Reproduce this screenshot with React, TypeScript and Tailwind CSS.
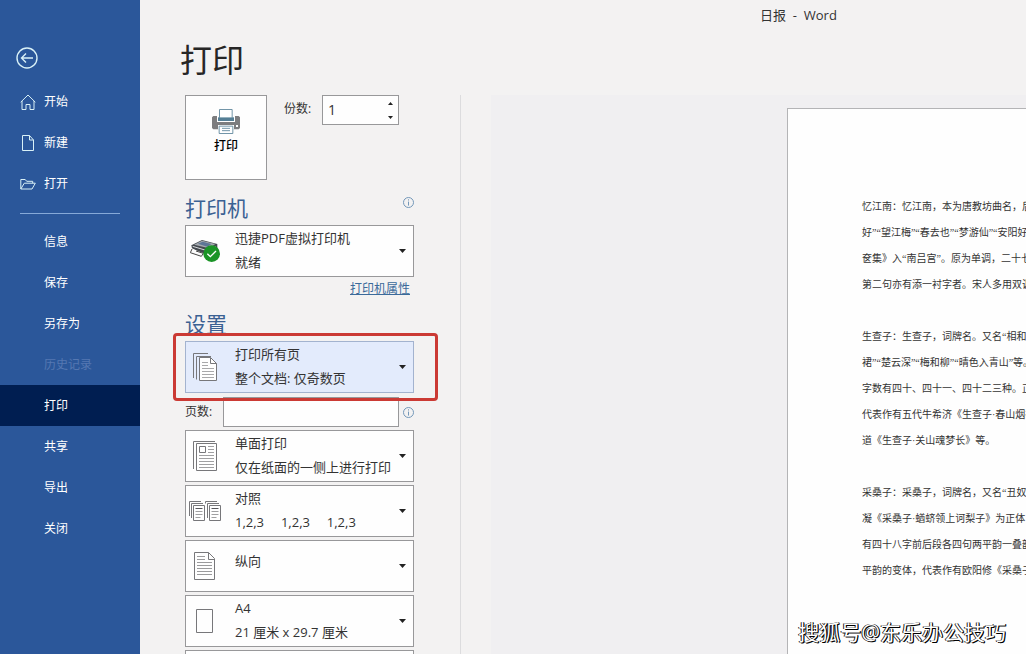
import { useState, type ReactNode } from "react";
import clsx from "clsx";

const paragraphs = [
  [
    "忆江南：忆江南，本为唐教坊曲名，后用为词牌名",
    "好”“望江梅”“春去也”“梦游仙”“安阳好”“步虚声",
    "奁集》入“南吕宫”。原为单调，二十七字",
    "第二句亦有添一衬字者。宋人多用双调",
  ],
  [
    "生查子：生查子，词牌名。又名“相和柳”",
    "裙”“楚云深”“梅和柳”“晴色入青山”等。",
    "字数有四十、四十一、四十二三种。正体",
    "代表作有五代牛希济《生查子·春山烟欲收》",
    "道《生查子·关山魂梦长》等。",
  ],
  [
    "采桑子：采桑子，词牌名，又名“丑奴儿”",
    "凝《采桑子·蝤蛴领上诃梨子》为正体，",
    "有四十八字前后段各四句两平韵一叠韵",
    "平韵的变体，代表作有欧阳修《采桑子》",
  ],
];

const navItems = ["信息", "保存", "另存为", "历史记录", "打印", "共享", "导出", "关闭"];

function BackIcon() {
  return (
    <svg width="22" height="22" viewBox="0 0 22 22" fill="none" stroke="currentColor" strokeWidth="1.4">
      <circle cx="11" cy="11" r="10" />
      <path d="M17 11H5.5M10 6.5 5.5 11l4.5 4.5" />
    </svg>
  );
}

function HomeIcon() {
  return (
    <svg width="16" height="16" viewBox="0 0 16 16" fill="none" stroke="currentColor">
      <path d="M.7 8.2 8 1l7.3 7.2M2 7v8.5h4v-5h4v5h4V7" />
    </svg>
  );
}

function NewIcon() {
  return (
    <svg width="16" height="16" viewBox="0 0 16 16" fill="none" stroke="currentColor">
      <path d="M2.5.5h7l4 4.5v10.5h-11zM9.5.5V5h4" />
    </svg>
  );
}

function OpenIcon() {
  return (
    <svg width="16" height="16" viewBox="0 0 16 16" fill="none" stroke="currentColor">
      <path d="M.8 13V3.5h4.4l1.5 1.8h6v1.9M.8 13 4.3 7.2h11L12 13z" />
    </svg>
  );
}

function PrintIcon() {
  return (
    <svg width="28" height="25" viewBox="0 0 84 75">
      <path d="M4 21h76l4 4v32l-4 4H4l-4-4V25z" fill="#7d7d7f" />
      <path d="M15 21h54v18H15z" fill="#fff" />
      <path d="M18 25h48v11H18z" fill="#557f96" />
      <path d="M22.5 1.5h38v25h-38z" fill="#fff" stroke="#557f96" strokeWidth="2.5" />
      <path d="M18 48h48v14H18z" fill="#fff" />
      <path d="M21.5 51.5h41v22h-41z" fill="#fff" stroke="#557f96" strokeWidth="2.5" />
      <path d="M30 58h24M30 65h24" stroke="#557f96" strokeWidth="2.5" />
      <path d="M72 48h6v6h-6z" fill="#fff" />
    </svg>
  );
}

function ReadyPrinterIcon() {
  return (
    <svg width="30" height="24" viewBox="0 0 90 72">
      <path d="m4 19 32-16 46 12v22L60 54 6 28z" fill="#44494f" />
      <path d="M12 17 36 5l40 10-18 13z" fill="#a3a8ae" />
      <path d="m24 14 14-6 26 7-12 8z" fill="#5d7596" />
      <path d="m8 22 50 15 20-15" fill="none" stroke="#d5d8db" strokeWidth="3" />
      <path d="m6 30 40 14-6 10L2 42z" fill="#fbfbfb" />
      <path d="m6 30-5 11 33 11 6-9-22-7" fill="none" stroke="#444" strokeWidth="3" />
      <circle cx="65" cy="44" r="25" fill="#1b9427" />
      <path d="m52 44 9 9 17-17" fill="none" stroke="#fff" strokeWidth="4" />
    </svg>
  );
}

function AllPagesIcon() {
  return (
    <svg width="24" height="28" viewBox="0 0 24 28" fill="none" stroke="#77777a">
      <path d="M.5 25V.5H15M3.5 26.5v-23H18" />
      <path d="M6.5 4.5h11l6 6v17h-17z" fill="#fff" />
      <path d="M17.5 4.5v6h6" />
      <path d="M9 9.5h6M9 12.5h6M9 15.5h12M9 18.5h12M9 21.5h12M9 24.5h12" stroke="#a9a9ab" />
    </svg>
  );
}

function OneSidedIcon() {
  return (
    <svg width="24" height="30" viewBox="0 0 24 30" fill="none" stroke="#77777a">
      <path d="M.5 28V.5H22" />
      <path d="M3.5 2.5h20v27h-20z" fill="#fff" />
      <path d="M6.5 5.5h6v6h-6z" />
      <path
        d="M15 5.5h6M15 8.5h6M15 11.5h6M6 14.5h15M6 17.5h15M6 20.5h15M6 23.5h15M6 26.5h15"
        stroke="#a0a0a2"
      />
    </svg>
  );
}

function CollateIcon() {
  return (
    <svg width="32" height="20" viewBox="0 0 32 20" fill="none" stroke="#77777a">
      <path d="M.5 15V.5H12M2.5 17V2.5H14M16.5 2.5V.5H28M18.5 17V2.5H30" />
      <path d="M4.5 4.5h11v15h-11zM20.5 4.5h11v15h-11z" fill="#fff" />
      <path d="M6.5 7.5h7M22.5 7.5h7" stroke="#55555a" />
      <path
        d="M6.5 10.5h7M6.5 13.5h7M6.5 16.5h5M22.5 10.5h7M22.5 13.5h7M22.5 16.5h5"
        stroke="#a0a0a2"
      />
    </svg>
  );
}

function PortraitIcon() {
  return (
    <svg width="22" height="28" viewBox="0 0 22 28" fill="none" stroke="#77777a">
      <path d="M.5.5h14l6 6v21H.5zM14.5.5v7h6" />
      <path d="M3 4.5h8M3 7.5h8M3 10.5h15M3 13.5h15M3 16.5h15M3 19.5h15M3 22.5h15" stroke="#9a9a9c" />
    </svg>
  );
}

function PaperIcon() {
  return (
    <svg width="18" height="24" viewBox="0 0 18 24" fill="none" stroke="#77777a">
      <path d="M.5.5h16v23H.5z" />
    </svg>
  );
}

function InfoIcon() {
  return (
    <svg width="11" height="11" viewBox="0 0 11 11" fill="none" stroke="#7397b8">
      <circle cx="5.5" cy="5.5" r="5" />
      <path d="M5.5 2.3v1.2M5.5 4.6v4" />
    </svg>
  );
}

type PickerProps = {
  name: string;
  icon: ReactNode;
  title: string;
  detail?: string;
  active?: boolean;
};

// the native select lies invisibly over the two-line face
function Picker({ name, icon, title, detail, active }: PickerProps) {
  return (
    <label
      className={clsx(
        "relative flex h-[52px] items-center border text-[13px] leading-6 whitespace-pre text-[#333]",
        active ? "border-[#a3b3cf] bg-[#e3ebfc]" : "border-[#98989a] bg-[#fefefe]"
      )}
    >
      <span className="flex w-[38px] justify-center">{icon}</span>
      <span className={clsx("ml-[11px] flex flex-1 flex-col self-start", !detail && "pt-2")}>
        <span>{title}</span>
        {detail && <span>{detail}</span>}
      </span>
      <svg className="mr-[7px]" width="7" height="4" viewBox="0 0 7 4">
        <path d="M0 0h7L3.5 4z" fill="#222" />
      </svg>
      <select aria-label={name} className="absolute inset-0 cursor-pointer opacity-0">
        <option>{title}</option>
      </select>
    </label>
  );
}

function Sidebar() {
  const [current, setCurrent] = useState("打印");
  const top = [
    { label: "开始", icon: <HomeIcon /> },
    { label: "新建", icon: <NewIcon /> },
    { label: "打开", icon: <OpenIcon /> },
  ];

  return (
    <nav className="w-[140px] shrink-0 bg-[#2b579a] text-xs text-white">
      <button aria-label="返回" className="mt-[47px] ml-4 block text-[#d9f1f7]">
        <BackIcon />
      </button>
      <div className="mt-3">
        {top.map((item) => (
          <button key={item.label} className="flex h-[41px] w-full items-center gap-2 pl-5">
            <span className="text-[#d9f1f7]">{item.icon}</span>
            {item.label}
          </button>
        ))}
      </div>
      <hr className="mx-5 mt-[9px] mb-[7px] border-[#86a9d8]" />
      {navItems.map((label) => (
        <button
          key={label}
          disabled={label === "历史记录"}
          onClick={() => setCurrent(label)}
          className={clsx(
            "block h-[41px] w-full pl-11 text-left disabled:text-[#5578b2]",
            label === current && "bg-[#001e51]"
          )}
        >
          {label}
        </button>
      ))}
    </nav>
  );
}

function PrintSettings() {
  const [copies, setCopies] = useState(1);

  return (
    <section className="flex w-[321px] shrink-0 flex-col">
      <h1 className="h-[95px] shrink-0 pt-10 pl-10 text-[32px] leading-10 text-[#262626]">打印</h1>
      <div className="flex-1 border-r border-[#dcdcde] pr-[46px] pl-[45px]">
        <div className="flex items-start">
          <button className="flex h-[85px] w-[82px] flex-col items-center border border-[#98989a] bg-[#fefefe] pt-[13px] text-xs font-medium text-black">
            <PrintIcon />
            <span className="mt-1">打印</span>
          </button>
          <label htmlFor="copies" className="ml-[17px] w-[38px] text-xs leading-7 text-[#333]">
            份数:
          </label>
          <div className="flex h-[30px] w-[77px] border border-[#98989a] bg-[#fefefe]">
            <input
              id="copies"
              inputMode="numeric"
              value={copies}
              onChange={(e) => setCopies(Number(e.target.value) || 1)}
              className="w-full min-w-0 flex-1 bg-transparent pl-[5px] text-sm text-[#333] outline-none"
            />
            <div className="flex w-4 flex-col items-center justify-around">
              <button aria-label="增加" onClick={() => setCopies(copies + 1)}>
                <svg width="5" height="3" viewBox="0 0 5 3">
                  <path d="M0 3h5L2.5 0z" fill="#222" />
                </svg>
              </button>
              <button aria-label="减少" onClick={() => setCopies(Math.max(1, copies - 1))}>
                <svg width="5" height="3" viewBox="0 0 5 3">
                  <path d="M0 0h5L2.5 3z" fill="#222" />
                </svg>
              </button>
            </div>
          </div>
        </div>

        <div className="mt-3 flex items-center justify-between">
          <h2 className="text-[21px] leading-[33px] text-[#3b6193]">打印机</h2>
          <span className="pb-3">
            <InfoIcon />
          </span>
        </div>
        <Picker name="打印机" icon={<ReadyPrinterIcon />} title="迅捷PDF虚拟打印机" detail="就绪" />
        <div className="flex h-[23px] justify-end pr-1">
          <a href="#" className="text-xs leading-6 text-[#3b6a9a] underline">
            打印机属性
          </a>
        </div>

        <h2 className="mt-2 text-[21px] leading-[33px] text-[#3b6193]">设置</h2>
        <div className="relative">
          <Picker name="打印范围" icon={<AllPagesIcon />} title="打印所有页" detail="整个文档: 仅奇数页" active />
          <div className="pointer-events-none absolute -top-2 -right-6 -bottom-2 -left-3 z-10 rounded-sm border-3 border-[#cb3a34]" />
        </div>
        <div className="flex items-center justify-between pt-1 pb-[3px]">
          <label htmlFor="pages" className="w-[38px] text-xs text-[#333]">
            页数:
          </label>
          <input
            id="pages"
            className="h-[30px] w-[176px] border border-[#98989a] bg-[#fefefe] px-1 text-xs outline-none"
          />
          <span className="ml-1">
            <InfoIcon />
          </span>
        </div>
        <div className="flex flex-col gap-[3px]">
          <Picker name="单双面" icon={<OneSidedIcon />} title="单面打印" detail="仅在纸面的一侧上进行打印" />
          <Picker name="对照" icon={<CollateIcon />} title="对照" detail="1,2,3     1,2,3     1,2,3" />
          <Picker name="方向" icon={<PortraitIcon />} title="纵向" />
          <Picker name="纸张大小" icon={<PaperIcon />} title="A4" detail="21 厘米 x 29.7 厘米" />
          <Picker name="页边距" icon={<PaperIcon />} title="" />
        </div>
      </div>
    </section>
  );
}

function Preview() {
  return (
    <section className="flex min-w-0 flex-1 flex-col pl-[30px]">
      <header className="h-[95px] shrink-0 pt-1 pl-20 text-center text-[13px] leading-[22px] whitespace-pre text-[#333]">
        日报  -  Word
      </header>
      <div className="flex flex-1 bg-[#f0eff1] pt-[13px] pl-[296px]">
        <article className="flex min-w-0 flex-1 flex-col gap-[26px] overflow-hidden border-t border-l border-[#b4b4b6] bg-[#fefefe] pt-[85px] pl-[74px] font-['Liberation_Serif','Noto_Sans_CJK_SC',serif] text-[10px] leading-[26px] whitespace-nowrap text-[#333]">
          {paragraphs.map((lines) => (
            <div key={lines[0]}>
              {lines.map((line) => (
                <p key={line}>{line}</p>
              ))}
            </div>
          ))}
        </article>
      </div>
    </section>
  );
}

export default function App() {
  return (
    <div
      lang="zh-CN"
      className="relative flex h-screen overflow-hidden bg-[#f3f2f2] font-['Open_Sans','Noto_Sans_CJK_SC',sans-serif]"
    >
      <Sidebar />
      <main className="flex min-w-0 flex-1">
        <PrintSettings />
        <Preview />
      </main>
      <div className="absolute right-5 bottom-2 text-[21px] leading-7 text-white [text-shadow:1px_1px_0_#000,1px_0_0_#000,-1px_0_0_#222]">
        搜狐号@东乐办公技巧
      </div>
    </div>
  );
}
